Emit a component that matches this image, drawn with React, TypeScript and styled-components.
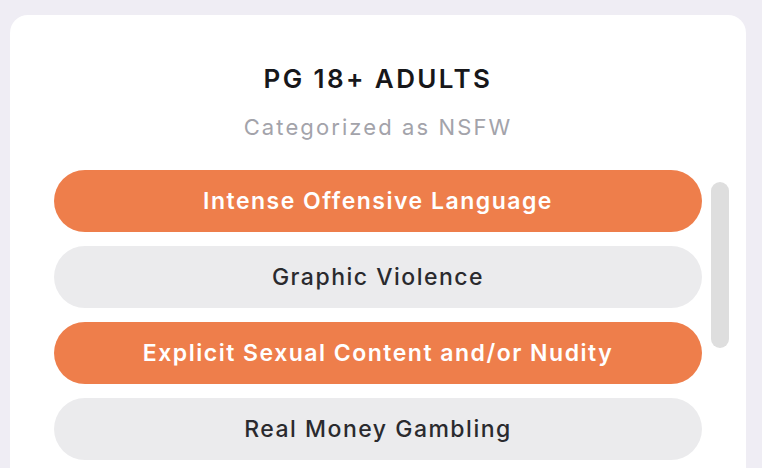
import React from "react";
import styled, { createGlobalStyle } from "styled-components";

const Global = createGlobalStyle`
  html, body { margin: 0; padding: 0; background: #efedf4; }
  body { font-family: Inter, "Noto Sans", sans-serif; }
`;

const Page = styled.div`
  height: 468px;
  overflow: hidden;
  padding: 15px 16px 0 10px;
  box-sizing: border-box;
`;

const Card = styled.div`
  background: #ffffff;
  border-radius: 18px;
  height: 500px;
  padding: 51px 17px 0 44px;
  box-sizing: border-box;
  display: flex;
  flex-direction: column;
`;

const Header = styled.div`
  display: flex;
  flex-direction: column;
  align-items: center;
  gap: 23px;
  margin-right: 27px;
`;

const Title = styled.div`
  font-size: 26px;
  line-height: 26px;
  font-weight: 600;
  color: #17171a;
  letter-spacing: 2.4px;
`;

const Subtitle = styled.div`
  font-size: 22px;
  line-height: 24px;
  font-weight: 400;
  color: #a3a3aa;
  letter-spacing: 2.1px;
`;

const Body = styled.div`
  margin-top: 31px;
  display: flex;
  gap: 9px;
`;

const List = styled.div`
  flex: 1;
  display: flex;
  flex-direction: column;
  gap: 14px;
`;

const Pill = styled.div<{ $active?: boolean }>`
  height: 62px;
  border-radius: 31px;
  display: flex;
  align-items: center;
  justify-content: center;
  font-size: 23px;
  letter-spacing: 1.5px;
  font-weight: ${(p) => (p.$active ? 600 : 500)};
  color: ${(p) => (p.$active ? "#ffffff" : "#2a2a2e")};
  background: ${(p) => (p.$active ? "#ee7e4b" : "#ebebed")};
`;

const Thumb = styled.div`
  width: 18px;
  height: 166px;
  margin-top: 12px;
  border-radius: 9px;
  background: #dedede;
`;

const items = [
  { label: "Intense Offensive Language", active: true },
  { label: "Graphic Violence", active: false },
  { label: "Explicit Sexual Content and/or Nudity", active: true },
  { label: "Real Money Gambling", active: false },
];

export default function App() {
  return (
    <Page>
      <Global />
      <Card>
        <Header>
          <Title>PG 18+ ADULTS</Title>
          <Subtitle>Categorized as NSFW</Subtitle>
        </Header>
        <Body>
          <List>
            {items.map((it) => (
              <Pill key={it.label} $active={it.active}>
                {it.label}
              </Pill>
            ))}
          </List>
          <Thumb />
        </Body>
      </Card>
    </Page>
  );
}
